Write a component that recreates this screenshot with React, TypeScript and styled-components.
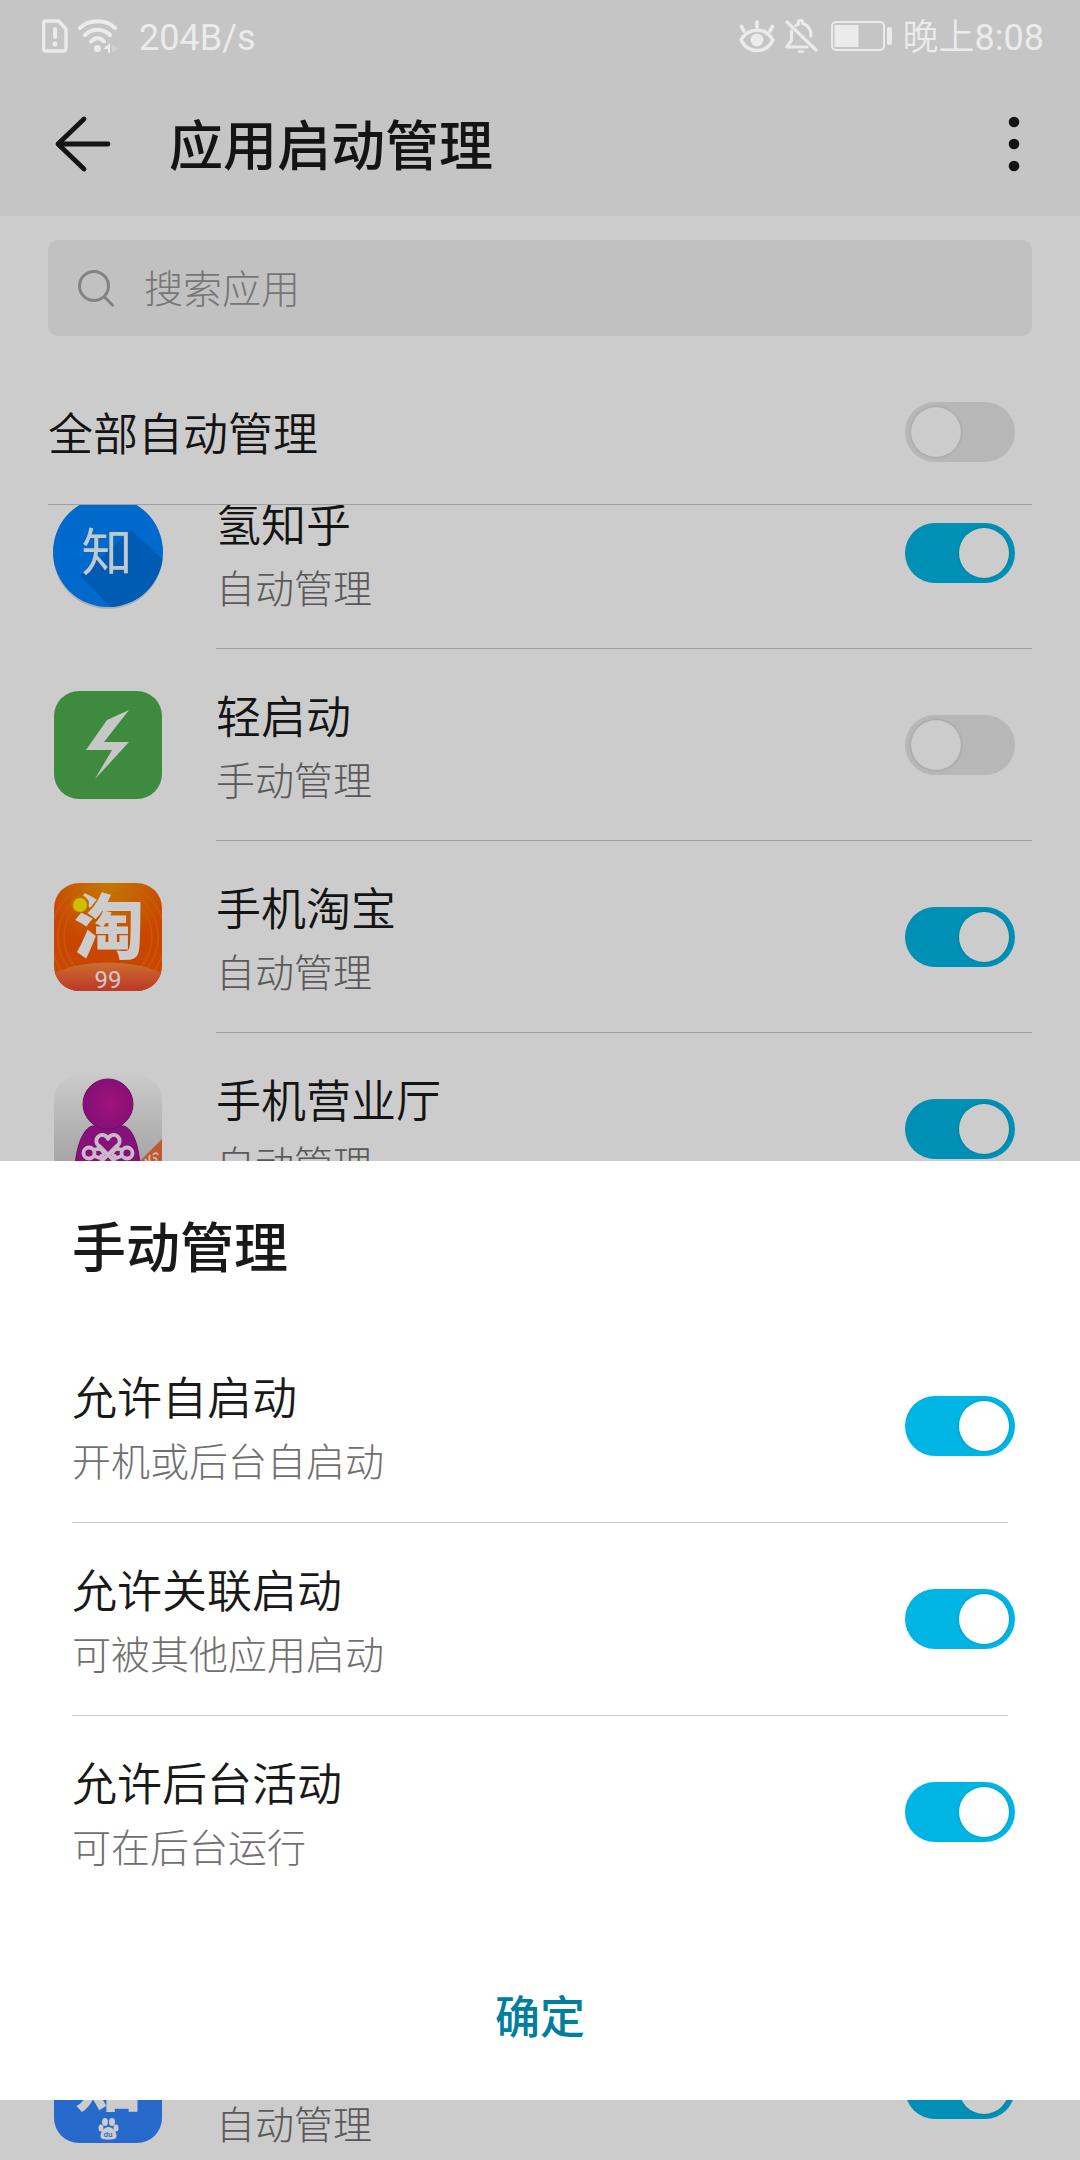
import React, { useId, useState } from "react";
import styled, { createGlobalStyle } from "styled-components";

const cjk = `Roboto, "Noto Sans CJK SC", sans-serif`;

const GlobalStyle = createGlobalStyle`
  * { box-sizing: border-box; }
  html, body, #root { height: 100%; }
  body { margin: 0; background: #fff; font-family: ${cjk}; color: #191919; }
  h1, h2, p, ul { margin: 0; padding: 0; }
  ul { list-style: none; }
  button { border: 0; padding: 0; background: none; color: inherit; font-family: inherit; cursor: pointer; }
`;

const Screen = styled.div`
  position: relative;
  display: flex;
  flex-direction: column;
  height: 100vh;
  overflow: hidden;
`;

const TopArea = styled.div`
  background: #f7f7f7;
`;

const StatusBar = styled.div`
  position: relative;
  z-index: 2;
  display: flex;
  justify-content: space-between;
  height: 72px;
  padding: 0 36px 0 42px;
  color: #ebebeb;
  font-size: 36px;
  line-height: 72px;
`;

const StatusGroup = styled.div`
  display: flex;
  align-items: center;
  gap: 10px;
`;

const StatusText = styled.span<{ $indent?: number }>`
  padding-left: ${(p) => p.$indent ?? 0}px;
  padding-top: 4px;
`;

const Thin = styled.span`
  font-weight: 350;
`;

const AppBar = styled.header`
  display: flex;
  align-items: center;
  height: 144px;
  padding: 0 54px;
`;

const IconButton = styled.button`
  display: flex;
`;

const Title = styled.h1`
  flex: 1;
  padding: 8px 0 0 58px;
  font-size: 54px;
  font-weight: 500;
  line-height: 72px;
`;

const SearchBox = styled.label`
  display: flex;
  align-items: center;
  gap: 30px;
  height: 96px;
  margin: 24px 48px;
  padding: 0 30px;
  border-radius: 10px;
  background: #f2f2f2;
`;

const SearchInput = styled.input`
  flex: 1;
  min-width: 0;
  border: 0;
  outline: 0;
  padding: 4px 0 0;
  background: transparent;
  color: #191919;
  font-family: ${cjk};
  font-size: 39px;
  font-weight: 300;
  line-height: 60px;
  &::placeholder { color: #949494; opacity: 1; }
`;

const AllRow = styled.div`
  display: flex;
  align-items: center;
  justify-content: space-between;
  height: 145px;
  margin: 0 48px;
  padding-right: 17px;
  border-bottom: 1px solid #c8c8c8;
`;

const Viewport = styled.div`
  flex: 1;
  min-height: 0;
  overflow: hidden;
`;

const AppList = styled.ul`
  margin: -48px 48px 0;
`;

const AppRow = styled.li`
  display: flex;
  height: 192px;
`;

const IconCell = styled.div`
  display: flex;
  align-items: center;
  justify-content: center;
  width: 120px;
  margin-right: 48px;
`;

const AppBody = styled.div`
  flex: 1;
  display: flex;
  align-items: center;
  justify-content: space-between;
  padding-right: 17px;
  border-bottom: 1px solid #c8c8c8;
`;

/* Rows that are scrolled beneath the sheet */
const CoveredRows = styled.li<{ $count: number }>`
  height: ${(p) => p.$count * 192}px;
`;

const Texts = styled.div`
  display: flex;
  flex-direction: column;
  padding-top: 8px;
`;

const Name = styled.label`
  min-height: 66px;
  font-size: 45px;
  font-weight: 350;
  line-height: 66px;
`;

const Note = styled.p`
  color: #707070;
  font-size: 39px;
  font-weight: 300;
  line-height: 60px;
`;

const Track = styled.input`
  appearance: none;
  flex: none;
  display: flex;
  align-items: center;
  width: 110px;
  height: 60px;
  margin: 0;
  padding: 0 6px;
  border-radius: 30px;
  background: #e5e5e5;
  cursor: pointer;
  &::before {
    content: "";
    width: 50px;
    height: 50px;
    border-radius: 50%;
    background: #fff;
    box-shadow: 0 0 3px rgba(0, 0, 0, 0.2);
  }
  &:checked {
    justify-content: flex-end;
    background: #00b5e3;
  }
`;

const Scrim = styled.div`
  position: absolute;
  inset: 0;
  z-index: 1;
  background: rgba(0, 0, 0, 0.2);
`;

const Sheet = styled.section`
  position: absolute;
  z-index: 3;
  left: 0;
  right: 0;
  bottom: 60px;
  background: #fff;
`;

const SheetTitle = styled.h2`
  padding: 53px 72px 44px;
  font-size: 54px;
  font-weight: 500;
  line-height: 72px;
`;

const OptionRow = styled.li`
  display: flex;
  align-items: center;
  justify-content: space-between;
  height: 192px;
  padding: 0 65px 0 72px;
`;

const Divider = styled.li`
  height: 1px;
  margin: 0 72px;
  background: #ccc;
`;

const SheetFooter = styled.footer`
  display: flex;
  justify-content: center;
  padding: 46px 72px 26px;
`;

const ConfirmButton = styled.button`
  width: 100%;
  height: 120px;
  color: #007e9e;
  font-size: 45px;
  font-weight: 500;
`;

function Toggle({ id, on, label }: { id: string; on: boolean; label?: string }) {
  const [checked, setChecked] = useState(on);
  return (
    <Track
      id={id}
      type="checkbox"
      role="switch"
      aria-label={label}
      checked={checked}
      onChange={(e) => setChecked(e.target.checked)}
    />
  );
}

const SimIcon = () => (
  <svg width="26" height="34" viewBox="0 0 26 34" fill="none" stroke="currentColor" strokeWidth="3.400">
    <path d="M4 2h12.500l7.500 8v19.500a2.500 2.500 0 0 1-2.500 2.500H4a2.500 2.500 0 0 1-2.500-2.500v-25A2.500 2.500 0 0 1 4 2z" strokeLinejoin="round" />
    <path d="M13 10v8" strokeWidth="4" strokeLinecap="round" />
    <circle cx="13" cy="25" r="2.500" fill="currentColor" stroke="none" />
  </svg>
);

const WifiIcon = () => (
  <svg width="40" height="34" viewBox="0 0 40 34" fill="none" stroke="currentColor" strokeWidth="4" strokeLinecap="round">
    <path d="M2 9C11 0 28 0 37 9" />
    <path d="M7 16c7-7 18-7 25 0" />
    <path d="M13 22.500c4-4.300 9-4.300 13 0" />
    <circle cx="19.500" cy="29.500" r="3.500" fill="currentColor" stroke="none" />
    <path d="M32 24v10h-2v-4h-5z" fill="currentColor" stroke="none" />
    <path d="M34 25l6 4.500-6 4.500z" fill="currentColor" stroke="none" opacity="0.300" />
  </svg>
);

const EyeIcon = () => (
  <svg width="36" height="34" viewBox="0 0 36 34" fill="none" stroke="currentColor" strokeWidth="3.600" strokeLinecap="round">
    <path d="M2 21c7-13 25-13 32 0-7 14-25 14-32 0z" strokeLinejoin="round" />
    <circle cx="18" cy="21" r="6.500" fill="currentColor" stroke="none" />
    <path d="M18 8V3M5 12L2.500 7.500M31 12l2.500-4.500" />
  </svg>
);

const BellOffIcon = () => (
  <svg width="36" height="34" viewBox="0 0 36 34" fill="none" stroke="currentColor" strokeWidth="3.200" strokeLinecap="round" strokeLinejoin="round">
    <path d="M2 3l29 28" />
    <path d="M6.500 12v9L2 28h20" />
    <path d="M11 6.500c1-.8 2-1.300 2.500-1.500C12.500 0 18.500 0 17.500 4.500 23 6 26 10 26 17" />
    <path d="M14 32.500h4" strokeWidth="2.500" />
  </svg>
);

const BatteryIcon = () => (
  <svg width="62" height="30" viewBox="0 0 62 30">
    <rect x="1" y="1" width="52" height="28" rx="4" fill="none" stroke="currentColor" strokeWidth="2" />
    <rect x="3.500" y="4" width="24" height="22" rx="1" fill="currentColor" />
    <rect x="56" y="6" width="5" height="18" rx="2" fill="currentColor" />
  </svg>
);

const BackIcon = () => (
  <svg width="57" height="60" viewBox="0 0 57 60" fill="none" stroke="currentColor" strokeWidth="4.800" strokeLinecap="round" strokeLinejoin="round">
    <path d="M54 30H4M30 5L4 30l26 25" />
  </svg>
);

const MoreIcon = () => (
  <svg width="24" height="60" viewBox="0 0 24 60" fill="currentColor">
    <circle cx="12" cy="8" r="5.300" />
    <circle cx="12" cy="30" r="5.300" />
    <circle cx="12" cy="52" r="5.300" />
  </svg>
);

const SearchIcon = () => (
  <svg width="36" height="38" viewBox="0 0 36 38" fill="none" stroke="#a3a3a3" strokeWidth="3">
    <circle cx="16" cy="17" r="14.500" />
    <path d="M26 27.500l9.500 9.500" />
  </svg>
);

const ZhihuIcon = () => (
  <svg width="110" height="114" viewBox="0 0 110 114">
    <defs>
      <clipPath id="zhihu-disc"><circle cx="55" cy="56" r="55" /></clipPath>
    </defs>
    <circle cx="55" cy="58" r="55" fill="#000" opacity="0.150" />
    <circle cx="55" cy="56" r="55" fill="#0084ff" />
    <path d="M78 34l50 46-50 52L27 80z" fill="#0074e0" clipPath="url(#zhihu-disc)" />
    <text x="54" y="75" textAnchor="middle" fontSize="51" fontWeight="400" fill="#f4fbff">知</text>
  </svg>
);

const BoltIcon = () => (
  <svg width="108" height="108" viewBox="0 0 108 108">
    <rect width="108" height="108" rx="25" fill="#4eae51" />
    <path d="M75 19L53 29 32 59h26L41 88l34-37H50z" fill="#f7fbf7" />
  </svg>
);

const TaobaoIcon = () => (
  <svg width="108" height="108" viewBox="0 0 108 108">
    <defs>
      <clipPath id="tb"><rect width="108" height="108" rx="25" /></clipPath>
      <radialGradient id="tbg" cx="0.500" cy="0" r="0.600">
        <stop offset="0" stopColor="#f59a00" />
        <stop offset="1" stopColor="#fb5800" />
      </radialGradient>
      <linearGradient id="tbf" x1="0" y1="0" x2="0" y2="1">
        <stop offset="0" stopColor="#ff8a3c" />
        <stop offset="1" stopColor="#ee4530" />
      </linearGradient>
    </defs>
    <g clipPath="url(#tb)">
      <rect width="108" height="108" fill="url(#tbg)" />
      <g fill="none" stroke="#ff7a1a" strokeWidth="2" opacity="0.500">
        <circle cx="54" cy="54" r="44" />
        <circle cx="54" cy="54" r="50" />
        <circle cx="54" cy="54" r="57" />
      </g>
      <path d="M0 90C30 76 78 76 108 90v18H0z" fill="url(#tbf)" />
    </g>
    <text x="55" y="70" textAnchor="middle" fontSize="70" fontWeight="900" fill="#fff">淘</text>
    <circle cx="26" cy="21" r="9" fill="#f68700" />
    <circle cx="26" cy="22" r="7" fill="#fff000" />
    <text x="54" y="105" textAnchor="middle" fontSize="24" fill="#fff">99</text>
  </svg>
);

const UnicomIcon = () => (
  <svg width="108" height="108" viewBox="0 0 108 108">
    <defs>
      <clipPath id="uc"><rect width="108" height="108" rx="25" /></clipPath>
      <linearGradient id="ucg" x1="0" y1="0" x2="0" y2="1">
        <stop offset="0" stopColor="#fdfdfd" />
        <stop offset="1" stopColor="#c4c4c6" />
      </linearGradient>
      <radialGradient id="ucp" cx="0.550" cy="0.500" r="0.550">
        <stop offset="0" stopColor="#c8189f" />
        <stop offset="1" stopColor="#a51394" />
      </radialGradient>
    </defs>
    <g clipPath="url(#uc)">
      <rect width="108" height="108" fill="url(#ucg)" />
      <path d="M38 51h32c12 4 17 30 17 58H20c0-28 6-54 18-58z" fill="#a81698" stroke="#8a0f80" strokeWidth="1" />
      <circle cx="54" cy="29" r="25" fill="url(#ucp)" stroke="#8f1088" strokeWidth="1" />
      <g fill="none" stroke="#fbe9fb" strokeWidth="3.800" strokeLinejoin="round">
        <path d="M42 92L62 71.500a6 6 0 1 0-8-7.500 6 6 0 1 0-8 7.500L66 92" />
        <circle cx="35" cy="78" r="5.500" />
        <circle cx="73" cy="78" r="5.500" />
        <path d="M40 75l6-2 4 5-4 5-6-2M68 75l-6-2-4 5 4 5 6-2" />
      </g>
      <path d="M108 64v44H64z" fill="#f0703a" />
      <g fill="none" stroke="#ffe3d6" strokeWidth="2">
        <path d="M91 84l5 6M96 80c-2 4 0 9 4 8s3-6-1-5" />
        <path d="M99 80c1-2 4-3 5 0" />
      </g>
    </g>
  </svg>
);

const TiebaIcon = () => (
  <svg width="108" height="108" viewBox="0 0 108 108">
    <rect width="108" height="108" rx="25" fill="#3385ff" />
    <text x="54" y="70" textAnchor="middle" fontSize="66" fontWeight="900" fill="#fff">贴</text>
    <g fill="#fff">
      <ellipse cx="51" cy="87" rx="3" ry="4" />
      <ellipse cx="58" cy="87" rx="3" ry="4" />
      <ellipse cx="47" cy="93" rx="2.500" ry="3.500" />
      <ellipse cx="62" cy="93" rx="2.500" ry="3.500" />
      <path d="M54.500 92c4 0 8 5 8 8.500s-2 4-8 4-8-.5-8-4 4-8.500 8-8.500z" />
    </g>
    <text x="54" y="102" textAnchor="middle" fontSize="8" fontWeight="500" fill="#3385ff">du</text>
  </svg>
);

type App = { name?: string; note: string; on: boolean; Icon: () => React.ReactElement };

const upperApps: App[] = [
  { name: "氢知乎", note: "自动管理", on: true, Icon: ZhihuIcon },
  { name: "轻启动", note: "手动管理", on: false, Icon: BoltIcon },
  { name: "手机淘宝", note: "自动管理", on: true, Icon: TaobaoIcon },
  { name: "手机营业厅", note: "自动管理", on: true, Icon: UnicomIcon },
];

const lowerApps: App[] = [{ note: "自动管理", on: true, Icon: TiebaIcon }];

const options = [
  { name: "允许自启动", note: "开机或后台自启动" },
  { name: "允许关联启动", note: "可被其他应用启动" },
  { name: "允许后台活动", note: "可在后台运行" },
];

function AppItem({ name, note, on, Icon }: App) {
  const id = useId();
  return (
    <AppRow>
      <IconCell><Icon /></IconCell>
      <AppBody>
        <Texts>
          <Name htmlFor={id}>{name}</Name>
          <Note>{note}</Note>
        </Texts>
        <Toggle id={id} on={on} label={name ? undefined : note} />
      </AppBody>
    </AppRow>
  );
}

function Option({ name, note }: { name: string; note: string }) {
  const id = useId();
  return (
    <OptionRow>
      <Texts>
        <Name htmlFor={id}>{name}</Name>
        <Note>{note}</Note>
      </Texts>
      <Toggle id={id} on />
    </OptionRow>
  );
}

export default function App() {
  return (
    <>
      <GlobalStyle />
      <Screen>
        <TopArea>
          <StatusBar>
            <StatusGroup>
              <SimIcon />
              <WifiIcon />
              <StatusText $indent={11}>204B/s</StatusText>
            </StatusGroup>
            <StatusGroup>
              <EyeIcon />
              <BellOffIcon />
              <BatteryIcon />
              <StatusText><Thin>晚上</Thin>8:08</StatusText>
            </StatusGroup>
          </StatusBar>
          <AppBar>
            <IconButton aria-label="返回"><BackIcon /></IconButton>
            <Title>应用启动管理</Title>
            <IconButton aria-label="更多"><MoreIcon /></IconButton>
          </AppBar>
        </TopArea>
        <SearchBox>
          <SearchIcon />
          <SearchInput type="text" placeholder="搜索应用" aria-label="搜索应用" />
        </SearchBox>
        <AllRow>
          <Texts>
            <Name htmlFor="all-auto">全部自动管理</Name>
          </Texts>
          <Toggle id="all-auto" on={false} />
        </AllRow>
        <Viewport>
          <AppList>
            {upperApps.map((app) => <AppItem key={app.name} {...app} />)}
            <CoveredRows $count={4} aria-hidden="true" />
            {lowerApps.map((app, i) => <AppItem key={i} {...app} />)}
          </AppList>
        </Viewport>
        <Scrim />
        <Sheet role="dialog" aria-labelledby="sheet-title">
          <SheetTitle id="sheet-title">手动管理</SheetTitle>
          <ul>
            {options.map((option, i) => (
              <React.Fragment key={option.name}>
                {i > 0 && <Divider role="separator" />}
                <Option {...option} />
              </React.Fragment>
            ))}
          </ul>
          <SheetFooter>
            <ConfirmButton>确定</ConfirmButton>
          </SheetFooter>
        </Sheet>
      </Screen>
    </>
  );
}
